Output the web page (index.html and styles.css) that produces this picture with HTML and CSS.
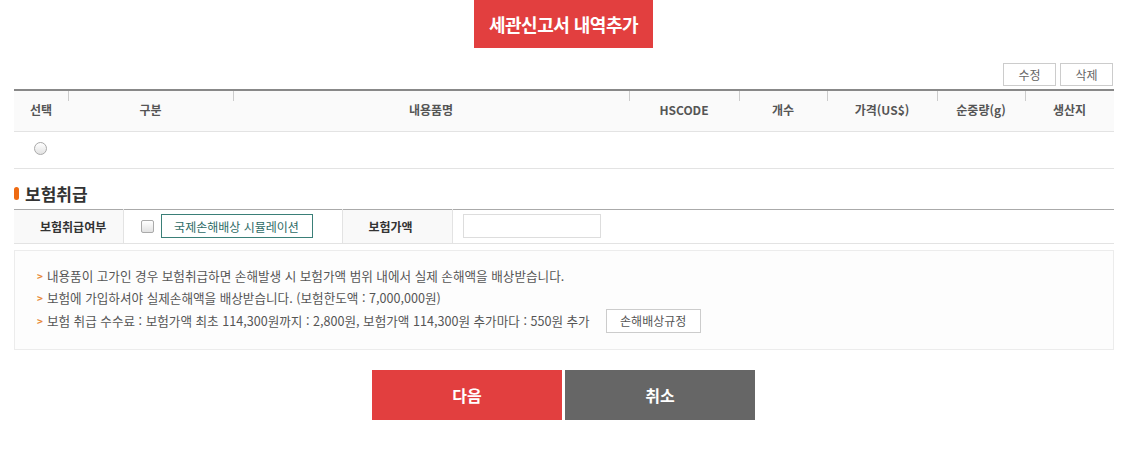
FILE: index.html
```html
<!DOCTYPE html>
<html lang="ko">
<head>
<meta charset="utf-8">
<link rel="stylesheet" href="styles.css">
</head>
<body>
<div class="page">
  <div class="top">
    <button class="btn-add">세관신고서 내역추가</button>
  </div>
  <div class="tools">
    <button class="btn-sm">수정</button>
    <button class="btn-sm">삭제</button>
  </div>
  <table class="list">
    <colgroup>
      <col style="width:54px"><col style="width:165px"><col style="width:396px"><col style="width:110px"><col style="width:88px"><col style="width:110px"><col style="width:88px"><col>
    </colgroup>
    <thead>
      <tr>
        <th>선택</th><th>구분</th><th>내용품명</th><th>HSCODE</th><th>개수</th><th>가격(US$)</th><th>순중량(g)</th><th>생산지</th>
      </tr>
    </thead>
    <tbody>
      <tr>
        <td class="c-radio"><span class="radio"></span></td><td></td><td></td><td></td><td></td><td></td><td></td><td></td>
      </tr>
    </tbody>
  </table>

  <h3 class="sec-title"><span class="dot"></span>보험취급</h3>
  <table class="ins">
    <colgroup>
      <col style="width:109px"><col style="width:219px"><col style="width:110px"><col>
    </colgroup>
    <tr>
      <th>보험취급여부</th>
      <td><div class="cell-flex"><span class="chk"></span><button class="btn-sim">국제손해배상 시뮬레이션</button></div></td>
      <th>보험가액</th>
      <td><input class="amt" type="text"></td>
    </tr>
  </table>

  <div class="notice">
    <p><span class="arr">&gt;</span>내용품이 고가인 경우 보험취급하면 손해발생 시 보험가액 범위 내에서 실제 손해액을 배상받습니다.</p>
    <p><span class="arr">&gt;</span>보험에 가입하셔야 실제손해액을 배상받습니다. (보험한도액 : 7,000,000원)</p>
    <p><span class="arr">&gt;</span>보험 취급 수수료 : 보험가액 최초 114,300원까지 : 2,800원, 보험가액 114,300원 추가마다 : 550원 추가 <button class="btn-rule">손해배상규정</button></p>
  </div>

  <div class="actions">
    <button class="btn-next">다음</button>
    <button class="btn-cancel">취소</button>
  </div>
</div>
</body>
</html>
```

FILE: styles.css
```css
* { box-sizing: border-box; }
html, body { margin: 0; padding: 0; background: #fff; }
body {
  font-family: "Noto Sans CJK KR", "Noto Sans", sans-serif;
  font-size: 12px;
  color: #555;
}
button { font-family: inherit; cursor: pointer; }
.page { width: 1100px; margin-left: 14px; }

.top { display: flex; justify-content: center; padding-right: 1px; }
.btn-add {
  width: 179px; height: 48px;
  background: #e23f3f; color: #fff; border: 0;
  font-size: 18px; font-weight: 700; letter-spacing: -0.5px;
  padding: 0;
}

.tools { display: flex; justify-content: flex-end; gap: 4px; margin-top: 15px; padding-right: 1px; }
.btn-sm {
  width: 53px; height: 23px; padding: 0;
  background: #fff; border: 1px solid #ccc; color: #666; font-size: 12px;
}

.list { width: 100%; border-collapse: collapse; table-layout: fixed; margin-top: 3px; border-top: 2px solid #888; }
.list th {
  height: 41px; background: #fafafa; color: #555; font-weight: 700; font-size: 12px;
  border-bottom: 1px solid #e3e3e3; position: relative; padding: 0 0 3px;
}
.list th + th::before {
  content: ""; position: absolute; left: 0; top: 0; width: 1px; height: 10px; background: #ccc;
}
.list td { height: 37px; border-bottom: 1px solid #e3e3e3; padding: 0; }
.c-radio { text-align: center; }
.radio {
  display: block; width: 13px; height: 13px; border-radius: 50%; margin: 0 auto; position: relative; top: -1px; left: -1px;
  border: 1px solid #aaa; background: linear-gradient(#fff, #e2e2e2);
}

.sec-title {
  display: flex; align-items: center; gap: 6px;
  margin: 12px 0 0; height: 26px; font-size: 17px; font-weight: 700; color: #333;
}
.dot { width: 5px; height: 13px; border-radius: 3px; background: #ee6a12; }

.ins { width: 100%; border-collapse: collapse; table-layout: fixed; margin-top: 2px; border-top: 1px solid #aaa; }
.ins th {
  height: 34px; background: #f9f9f9; color: #333; font-weight: 700; font-size: 12px;
  border-bottom: 1px solid #e3e3e3; border-right: 1px solid #e3e3e3; padding: 0 0 0 26px; text-align: left;
}
.ins td { border-bottom: 1px solid #e3e3e3; border-right: 1px solid #e3e3e3; padding: 0 0 0 10px; }
.ins td:last-child { border-right: 0; }
.cell-flex { display: flex; align-items: center; gap: 7px; padding-left: 7px; }
.chk {
  width: 13px; height: 13px; border: 1px solid #aaa; border-radius: 2px;
  background: linear-gradient(#fff, #e2e2e2);
}
.btn-sim {
  width: 152px; height: 24px; padding: 0;
  background: #fff; border: 1px solid #3a7f78; color: #2e6b66; font-size: 12px;
}
.amt { width: 138px; height: 24px; border: 1px solid #ddd; display: block; }

.notice {
  margin-top: 6px; border: 1px solid #ececec; background: #fdfdfd;
  padding: 14px 22px 14px; height: 100px;
}
.notice p { margin: 0; height: 22.5px; line-height: 22px; color: #555; font-size: 12.6px; display: flex; align-items: center; white-space: nowrap; }
.arr { color: #e88a3a; font-size: 10px; margin-right: 4px; font-weight: 700; }
.btn-rule {
  width: 95px; height: 24px; padding: 0; margin-left: 16px;
  background: #fff; border: 1px solid #ccc; color: #555; font-size: 12px;
}

.actions { display: flex; justify-content: center; gap: 3px; margin-top: 20px; padding-right: 1px; }
.btn-next, .btn-cancel {
  width: 190px; height: 50px; border: 0; color: #fff; font-size: 16px; font-weight: 700; padding: 0;
}
.btn-next { background: #e23f3f; }
.btn-cancel { background: #666; }
```
